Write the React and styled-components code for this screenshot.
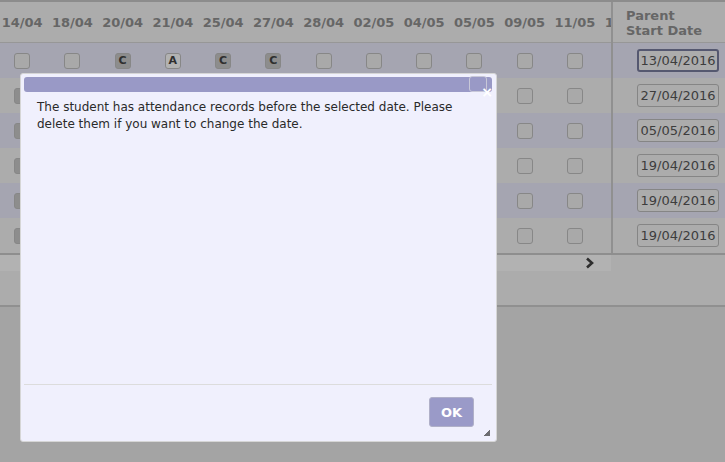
import React from "react";
import styled, { createGlobalStyle } from "styled-components";

const GlobalStyle = createGlobalStyle`
  html, body {
    margin: 0;
    padding: 0;
    background: #a4a4a4;
  }
  body {
    font-family: "DejaVu Sans", Verdana, sans-serif;
  }
`;

const dates = [
  "14/04", "18/04", "20/04", "21/04", "25/04", "27/04",
  "28/04", "02/05", "04/05", "05/05", "09/05", "11/05", "16/05",
];

// "D" = filled box whose letter sits behind the dialog
const marks = [
  ["", "", "C", "A", "C", "C", "", "", "", "", "", "", ""],
  ["D", "", "", "", "", "", "", "", "", "", "", "", ""],
  ["D", "", "", "", "", "", "", "", "", "", "", "", ""],
  ["D", "", "", "", "", "", "", "", "", "", "", "", ""],
  ["D", "", "", "", "", "", "", "", "", "", "", "", ""],
  ["D", "", "", "", "", "", "", "", "", "", "", "", ""],
];

const startDates = [
  "13/04/2016",
  "27/04/2016",
  "05/05/2016",
  "19/04/2016",
  "19/04/2016",
  "19/04/2016",
];

const App = () => {
  return (
    <Page>
      <GlobalStyle />
      <TopLine />
      <Table>
        <DatePanel>
          <DateScroller>
            <HeaderRow>
              {dates.map((d) => (
                <DateHead key={d}>{d}</DateHead>
              ))}
            </HeaderRow>
            {marks.map((row, i) => (
              <Row key={i} $odd={i % 2 === 0}>
                {row.map((m, j) => (
                  <Cell key={j}>
                    <Check $mark={m}>{m === "D" ? "" : m}</Check>
                  </Cell>
                ))}
              </Row>
            ))}
          </DateScroller>
        </DatePanel>
        <ParentPanel>
          <ParentHead>
            <span>Parent</span>
            <span>Start Date</span>
          </ParentHead>
          {startDates.map((d, i) => (
            <Row key={i} $odd={i % 2 === 0}>
              <DateInput $focus={i === 0}>{d}</DateInput>
            </Row>
          ))}
        </ParentPanel>
      </Table>
      <BottomLine />
      <ScrollRow>
        <ScrollTrack>
          <svg width="10" height="12" viewBox="0 0 10 12">
            <polyline
              points="2,1.5 7,6 2,10.5"
              fill="none"
              stroke="#2e2e2e"
              strokeWidth="2.6"
            />
          </svg>
        </ScrollTrack>
      </ScrollRow>
      <Filler />
      <FillerLine />

      <Dialog>
        <TitleBar>
          <CloseButton>
            <CloseMark>×</CloseMark>
          </CloseButton>
        </TitleBar>
        <Content>
          The student has attendance records before the selected date. Please
          delete them if you want to change the date.
        </Content>
        <Footer>
          <OkButton>OK</OkButton>
        </Footer>
        <Grip>
          <svg width="8" height="8" viewBox="0 0 8 8">
            <path
              d="M7 1L1 7M7 3L3 7M7 5L5 7M7 2L2 7M7 4L4 7M7 6L6 7"
              stroke="#333"
              strokeWidth="0.7"
            />
          </svg>
        </Grip>
      </Dialog>
    </Page>
  );
};

const Page = styled.div`
  position: relative;
  width: 725px;
  height: 462px;
  overflow: hidden;
  background: #a4a4a4;
`;

const TopLine = styled.div`
  height: 2px;
  background: #8c8c8c;
`;

const Table = styled.div`
  display: flex;
  background: #acacac;
`;

const DatePanel = styled.div`
  width: 613px;
  overflow: hidden;
  border-right: 2px solid #909090;
  box-sizing: border-box;
`;

const DateScroller = styled.div`
  margin-left: -3px;
  width: 660px;
`;

const HeaderRow = styled.div`
  display: flex;
  height: 40px;
  border-bottom: 1px solid #979797;
  align-items: center;
`;

const DateHead = styled.div`
  flex: 0 0 50.25px;
  text-align: center;
  font-size: 13px;
  font-weight: bold;
  color: #666;
`;

const Row = styled.div`
  display: flex;
  align-items: center;
  height: 35px;
  background: ${(p) => (p.$odd ? "#a5a5b1" : "#acacac")};
`;

const Cell = styled.div`
  flex: 0 0 50.25px;
  display: flex;
  justify-content: center;
`;

const Check = styled.div`
  width: 16px;
  height: 16px;
  box-sizing: border-box;
  border: 1px solid #878787;
  border-radius: 3px;
  display: flex;
  align-items: center;
  justify-content: center;
  font-size: 11px;
  font-weight: bold;
  color: #2f2f2f;
  background: ${(p) =>
    p.$mark === "C" || p.$mark === "D"
      ? "#8d8d8d"
      : p.$mark === "A"
      ? "#b2b2b2"
      : "#a9a9a9"};
`;

const ParentPanel = styled.div`
  flex: 1;
`;

const ParentHead = styled.div`
  height: 40px;
  border-bottom: 1px solid #979797;
  padding: 6px 0 0 13px;
  box-sizing: border-box;
  height: 41px;
  display: flex;
  flex-direction: column;
  font-size: 13px;
  font-weight: bold;
  line-height: 15px;
  color: #666;
  white-space: nowrap;
`;

const DateInput = styled.div`
  margin-left: 24px;
  width: 82px;
  height: 23px;
  box-sizing: border-box;
  border: ${(p) => (p.$focus ? "2px solid #555870" : "1px solid #858585")};
  border-radius: 3px;
  background: #acacac;
  font-size: 13px;
  color: #3d3d3d;
  display: flex;
  align-items: center;
  justify-content: center;
`;

const BottomLine = styled.div`
  height: 2px;
  background: #8e8e8e;
`;

const ScrollRow = styled.div`
  height: 16px;
  background: #acacac;
`;

const ScrollTrack = styled.div`
  width: 611px;
  height: 16px;
  background: #b2b2b2;
  display: flex;
  align-items: center;
  justify-content: flex-end;
  padding-right: 16px;
  box-sizing: border-box;
`;

const Filler = styled.div`
  height: 34px;
  background: #acacac;
`;

const FillerLine = styled.div`
  height: 2px;
  background: #909090;
`;

const Dialog = styled.div`
  position: absolute;
  left: 20px;
  top: 73px;
  width: 477px;
  height: 369px;
  box-sizing: border-box;
  padding: 3px;
  background: #f0f0fd;
  border: 1px solid #d6d6d6;
  border-radius: 3px;
  display: flex;
  flex-direction: column;
  font-family: "DejaVu Sans", Verdana, sans-serif;
`;

const TitleBar = styled.div`
  position: relative;
  height: 15px;
  background: #9999c6;
  border-radius: 3px;
  margin-right: 1px;
`;

const CloseButton = styled.div`
  position: absolute;
  right: 5px;
  top: -1px;
  width: 18px;
  height: 16px;
  box-sizing: border-box;
  border: 1px solid #c8c8d8;
  border-radius: 3px;
`;

const CloseMark = styled.span`
  position: absolute;
  right: -7px;
  bottom: -8px;
  font-size: 14px;
  line-height: 14px;
  font-weight: bold;
  color: #fff;
`;

const Content = styled.div`
  flex: 1;
  padding: 7px 13px;
  font-size: 12px;
  line-height: 17px;
  color: #2a2a2a;
`;

const Footer = styled.div`
  border-top: 1px solid #dcdcdc;
  margin-right: 1px;
  height: 54px;
  box-sizing: border-box;
  padding: 12px 18px 0 0;
  display: flex;
  justify-content: flex-end;
  align-items: flex-start;
`;

const OkButton = styled.button`
  width: 45px;
  height: 30px;
  background: #9a9ac8;
  border: 1px solid #b0b0c8;
  border-radius: 3px;
  color: #fff;
  font-family: "DejaVu Sans", Verdana, sans-serif;
  font-size: 13px;
  font-weight: bold;
  padding: 0;
`;

const Grip = styled.div`
  position: absolute;
  right: 5px;
  bottom: 4px;
  width: 8px;
  height: 8px;
  display: flex;
`;

export default App;
